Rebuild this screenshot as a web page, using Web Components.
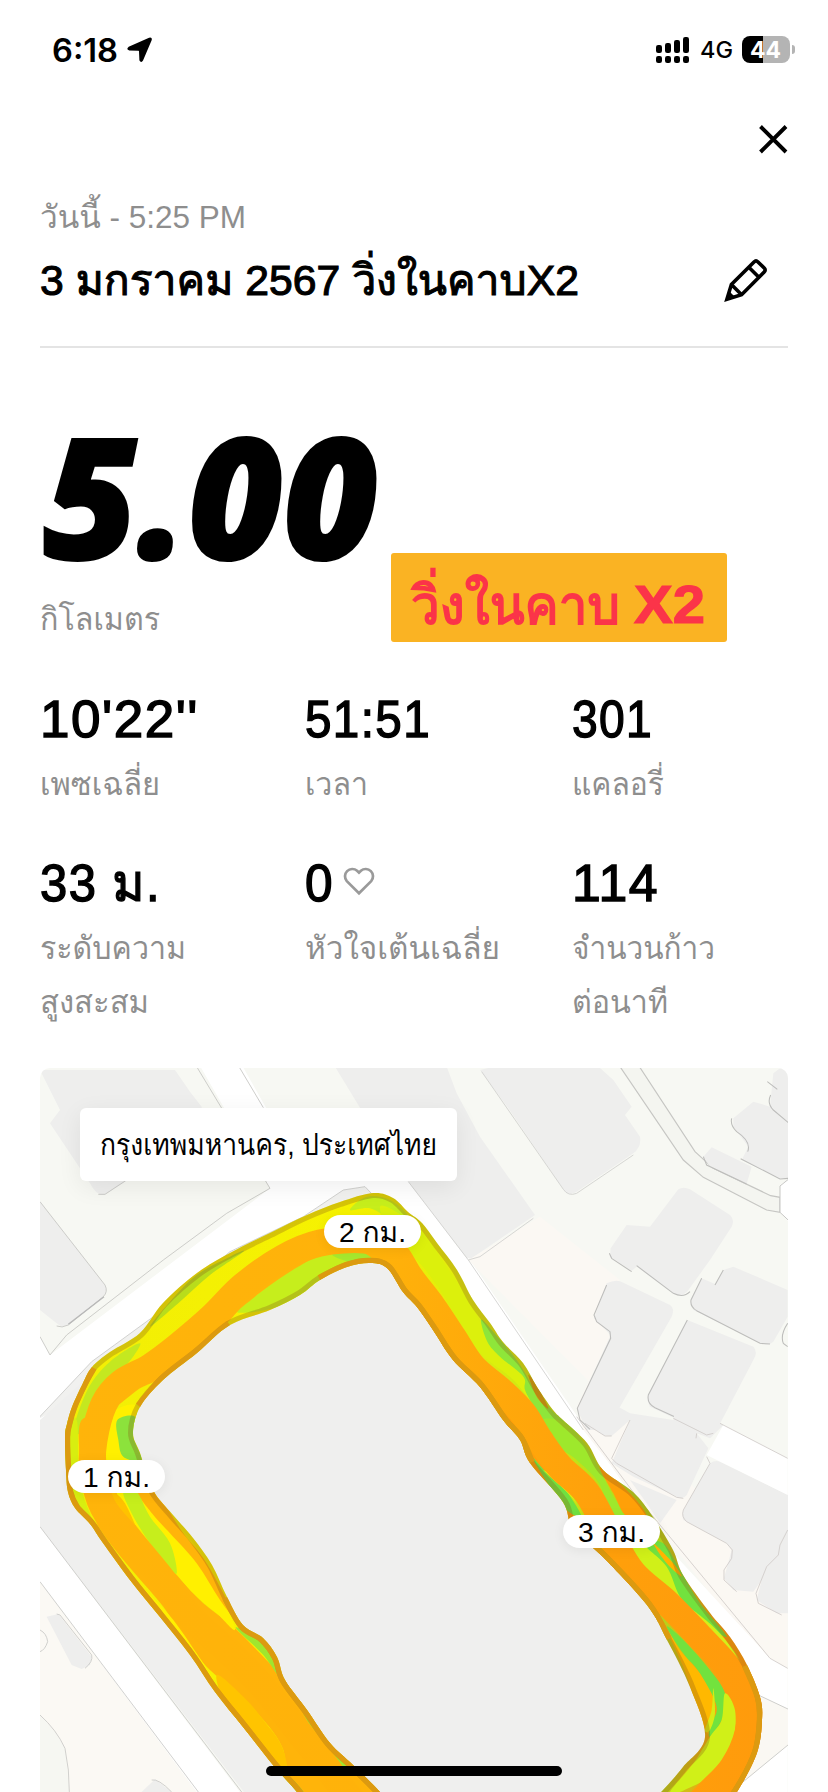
<!DOCTYPE html>
<html lang="th">
<head>
<meta charset="utf-8">
<title>Run summary</title>
<style>
html,body{margin:0;padding:0;background:#fff}
body{width:828px;height:1792px;overflow:hidden;font-family:"Liberation Sans",Loma,"Noto Sans Thai","Noto Sans",sans-serif;color:#000}
</style>
</head>
<body>
<run-page></run-page>
<script>
const define = (name, html, setup) => customElements.define(name, class extends HTMLElement {
  connectedCallback() {
    if (this.shadowRoot) return;
    const t = document.createElement('template');
    t.innerHTML = html;
    this.attachShadow({ mode: 'open' }).appendChild(t.content.cloneNode(true));
    if (setup) setup(this, this.shadowRoot);
  }
});

/* A single line of text stretched to the width given in its w attribute. */
define('fit-text', `<style>
:host{display:block;white-space:nowrap}
span{display:inline-block;transform-origin:0 50%}
</style><span><slot></slot></span>`, (el, root) => {
  const w = +el.getAttribute('w');
  el.style.width = w + 'px';
  const s = root.querySelector('span');
  const r = s.getBoundingClientRect().width;
  if (r) s.style.transform = `scaleX(${w / r})`;
});

define('status-bar', `<style>
:host{display:flex;height:100px;box-sizing:border-box;padding:30px 33px 0 52px;align-items:flex-start;font-family:Inter,sans-serif}
fit-text{line-height:41px}
.time{font-size:32px;font-weight:600}
.loc{margin:7px auto 0 8px}
.sig{margin-top:7px}
.net{font-size:23px;font-weight:500;margin:0 9px 0 10px}
.bat{display:flex;align-items:center;margin-top:6px}
.cell{width:48px;height:27px;border-radius:8px;background:linear-gradient(90deg,#000 21px,#b4b4b4 21px);color:#fff;font-size:23px;font-weight:700;box-sizing:border-box;padding-left:8px}
.cell fit-text{line-height:28px}
.cap{width:3px;height:9px;border-radius:0 4px 4px 0;background:#b4b4b4;margin-left:2px}
</style>
<fit-text class="time" w="66">6:18</fit-text>
<svg class="loc" width="27" height="26" viewBox="0 0 27 26"><path d="M23.4 1.5 Q25.6 .8 24.9 3 L16.3 23.2 Q15.2 25.2 14.2 23.2 L13.8 14.1 Q13.7 13.1 12.7 13 L3.2 12.6 Q1.2 11.8 3 10.6Z" stroke="#000" stroke-width="1.6" stroke-linejoin="round"/></svg>
<svg class="sig" width="34" height="27" viewBox="0 0 34 27"><g><rect x="0" y="8" width="6" height="8" rx="2.2"/><rect x="9" y="6" width="6" height="10" rx="2.2"/><rect x="18" y="3" width="6" height="13" rx="2.2"/><rect x="27" y="0" width="6" height="16" rx="2.2"/><rect x="0" y="19" width="6" height="7" rx="2.2"/><rect x="9" y="19" width="6" height="7" rx="2.2"/><rect x="18" y="19" width="6" height="7" rx="2.2"/><rect x="27" y="19" width="6" height="7" rx="2.2"/></g></svg>
<fit-text class="net" w="33">4G</fit-text>
<div class="bat"><div class="cell"><fit-text w="31">44</fit-text></div><div class="cap"></div></div>`);

define('close-row', `<style>
:host{display:flex;justify-content:flex-end;height:95px;padding:24px 40px 0 0;box-sizing:border-box}
</style><svg width="30" height="30" viewBox="0 0 30 30"><path d="M2.5 2.5 28 28M28 2.5 2.5 28" fill="none" stroke="#000" stroke-width="3.9"/></svg>`);

define('run-title', `<style>
:host{display:block;margin:0 40px;height:153px;box-sizing:border-box;border-bottom:2px solid #e4e4e4}
.date{font-size:32px;line-height:44px;color:#8e8e8e}
.row{display:flex;justify-content:space-between;margin-top:11px}
.name{font-size:43px;line-height:60px;-webkit-text-stroke:1.1px #000}
svg{margin:8px 20px 0 0}
</style>
<fit-text class="date" w="206"><slot name="date"></slot></fit-text>
<div class="row"><fit-text class="name" w="539"><slot></slot></fit-text>
<svg width="44" height="44" viewBox="0 0 44 44" fill="none" stroke="#000" stroke-width="3.6" stroke-linejoin="miter"><path d="M2.9 41.2 7.4 26.5 30 3.9 Q32 1.9 34 3.9 L40.2 10.1 Q42.2 12.1 40.2 14.1 L17.6 36.7Z M7.4 26.5 17.6 36.7 M24.8 9.2 34.9 19.3"/><path d="M2 42 5 33 11 39Z" fill="#000" stroke="none"/></svg></div>`);

define('run-distance', `<style>
:host{display:block;position:relative;height:219px;margin:74px 40px 0}
.num{font:italic 800 168px/144px "Open Sans",sans-serif;-webkit-text-stroke:2px #000;margin-left:3px}
.unit{font-size:32px;line-height:44px;color:#8e8e8e;margin-top:31px}
.tag{position:absolute;left:351px;top:131px;width:336px;height:89px;border-radius:3px;background:#fab323;color:#fb3449;box-sizing:border-box;padding:17px 0 0 20px;display:flex;gap:14px;line-height:70px;font-size:54px}
.th{-webkit-text-stroke:1.8px #fb3449}.x{font-weight:700;font-size:53px;-webkit-text-stroke:1.2px #fb3449}
</style>
<fit-text class="num" w="335"><slot></slot></fit-text>
<fit-text class="unit" w="120">กิโลเมตร</fit-text>
<div class="tag"><fit-text class="th" w="209">วิ่งในคาบ</fit-text><fit-text class="x" w="71">X2</fit-text></div>`);

define('run-stat', `<style>
:host{display:block}
.top{display:flex;gap:9px;font-size:52px;line-height:60px;letter-spacing:1.5px;-webkit-text-stroke:1.4px #000}
.label{font-size:32px;line-height:54px;color:#8e8e8e;margin-top:8px}
</style><div class="top"><slot name="value"></slot><slot name="icon"></slot></div><div class="label"><slot></slot></div>`);

define('stat-grid', `<style>
:host{display:grid;grid-template-columns:265px 267px 1fr;row-gap:42px;margin:48px 40px 0;align-items:start}
svg{margin-top:12px}
</style>
<run-stat><fit-text slot="value" w="159">10'22''</fit-text><fit-text w="120">เพซเฉลี่ย</fit-text></run-stat>
<run-stat><fit-text slot="value" w="126">51:51</fit-text><fit-text w="63">เวลา</fit-text></run-stat>
<run-stat><fit-text slot="value" w="81">301</fit-text><fit-text w="92">แคลอรี่</fit-text></run-stat>
<run-stat><fit-text slot="value" w="121">33 ม.</fit-text><fit-text w="146">ระดับความ</fit-text><fit-text w="109">สูงสะสม</fit-text></run-stat>
<run-stat><fit-text slot="value" w="29">0</fit-text><svg slot="icon" width="32" height="32" viewBox="0 0 32 32"><path d="M16 28.3 3.8 16.1 A7.3 7.3 0 0 1 14.1 5.8 L16 7.7 17.9 5.8 A7.3 7.3 0 0 1 28.2 16.1Z" fill="none" stroke="#9a9a9a" stroke-width="2.7"/></svg><fit-text w="195">หัวใจเต้นเฉลี่ย</fit-text></run-stat>
<run-stat><fit-text slot="value" w="87">114</fit-text><fit-text w="143">จำนวนก้าว</fit-text><fit-text w="96">ต่อนาที</fit-text></run-stat>`);

define('map-pill', `<style>
:host{position:absolute;width:97px;height:33px;border-radius:17px;background:#fff;box-sizing:border-box;padding-left:15px;font-size:28px;box-shadow:0 2px 12px #0001}
fit-text{line-height:36px}
</style><fit-text w="67"><slot></slot></fit-text>`);

/* Closed or open Catmull-Rom curve through "x,y x,y ..." points. */
function curve(str, closed) {
  const p = str.trim().split(/\s+/).map(s => s.split(',').map(Number)), n = p.length;
  const at = i => closed ? p[(i + n) % n] : p[Math.max(0, Math.min(n - 1, i))];
  let d = 'M' + p[0];
  for (let i = 0; i < (closed ? n : n - 1); i++) {
    const [a, b, c, e] = [at(i - 1), at(i), at(i + 1), at(i + 2)];
    d += `C${b[0] + (c[0] - a[0]) / 6},${b[1] + (c[1] - a[1]) / 6} ${c[0] - (e[0] - b[0]) / 6},${c[1] - (e[1] - b[1]) / 6} ${c}`;
  }
  return d + (closed ? 'Z' : '');
}
const OUTER = '310,1812 297,1792 273,1765 243,1727 215,1692 190,1655 160,1617 130,1580 103,1543 90,1524 75,1508 68,1492 66,1470 65,1437 67,1424 72,1407 83,1383 92,1367 110,1352 140,1333 163,1303 197,1273 230,1253 270,1233 307,1215 340,1202 373,1193 393,1198 408,1212 422,1223 437,1243 457,1270 473,1300 490,1323 503,1342 523,1363 537,1387 553,1410 563,1420 587,1443 603,1470 633,1492 653,1517 673,1550 683,1575 710,1613 730,1637 747,1665 760,1697 762,1720 757,1753 737,1792 720,1812';
const INNER = '640,1812 663,1790 683,1767 705,1737 690,1687 667,1640 647,1605 603,1557 573,1530 563,1502 530,1463 520,1440 503,1420 480,1387 453,1360 433,1330 417,1307 403,1292 387,1268 370,1263 347,1267 320,1280 300,1295 270,1310 230,1325 197,1353 163,1380 140,1407 133,1433 140,1453 153,1490 173,1515 193,1538 212,1565 227,1597 243,1625 263,1638 277,1657 285,1680 307,1710 330,1743 353,1765 380,1792 395,1812';
const RING = curve(OUTER) + 'L' + curve(INNER).slice(1) + 'Z';
/* Part of an edge, from its i-th to its j-th point. */
const part = (edge, i, j) => curve(edge.split(' ').slice(i, j).join(' '));
const BAND = '365,1812 345,1792 325,1765 297,1730 263,1687 230,1653 193,1620 163,1580 130,1540 103,1507 93,1470 94,1440 104,1404 121,1383 150,1367 177,1347 212,1317 243,1286 283,1258 320,1243 365,1240 392,1250 410,1277 433,1307 453,1337 473,1367 500,1390 523,1413 540,1440 560,1467 587,1493 610,1535 633,1573 667,1603 700,1637 730,1670 748,1702 748,1733 733,1767 710,1792 690,1812';
/* Colour patches on the track, in the units of the tile that holds them. */
const tiles = {
  a: [30, 1060, [
    ['#c6ee1c', '620,755 700,690 790,620 890,575 990,570 1045,602 960,610 890,645 820,700 730,745'],
    ['#a6e82e', '905,582 960,568 1030,572 1020,600 960,606'],
    ['#c6ee1c', '960,450 1010,410 1080,420 1135,470 1090,480 1020,445'],
    ['#b8dc1c', '360,800 420,725 500,645 600,590 640,575 540,645 450,725'],
    ['#c4e820', '130,1110 175,985 240,905 330,850 290,915 235,955 185,1020 160,1110'],
    ['#8ce23c', '262,1110 300,1060 318,1050 315,1110'],
    ['#ffb40a', '270,950 350,905 440,835 520,745 640,635 780,548 880,515 1000,525 1110,550 1075,630 1000,578 900,572 840,600 750,655 640,738 590,790 500,865 400,950 330,985 250,1040']]],
  b: [400, 1060, [
    ['#dcf00c', '-60,440 20,475 80,530 140,620 200,710 250,800 330,890 420,1010 440,1110 400,1040 340,960 240,880 180,790 120,690 50,600 -10,565'],
    ['#8ee63a', '243,780 275,810 350,900 400,980 450,1045 510,1110 430,1120 405,1050 375,990 370,950 300,890 262,845'],
    ['#cf9c10', '385,945 410,975 445,1045 410,1010']]],
  c: [30, 1420, [
    ['#ffb40a', '155,0 150,120 165,210 195,300 240,370 310,455 400,560 450,640 530,740 600,800 700,900 760,990 790,1130 1070,1130 980,1040 900,965 830,865 765,780 690,700 610,620 520,550 440,465 375,390 320,320 270,240 235,150 225,60 240,0'],
    ['#d8ee10', '105,20 140,0 145,120 155,210 185,300 150,270 115,200'],
    ['#fff000', '230,60 245,-20 320,-40 300,80 330,180 420,290 490,370 540,450 615,625 560,580 490,520 430,450 350,350 290,280 235,150'],
    ['#8ce23c', '262,0 315,-10 310,50 335,120 280,110 265,60'],
    ['#ffb40a', '322,215 375,215 460,340 530,430 620,600 570,540 500,430 420,340 370,285'],
    ['#c6ee1c', '280,215 320,215 360,290 420,370 440,460 400,425 340,340 300,270'],
    ['#ffc200', '240,215 285,250 340,380 300,330 250,270'],
    ['#a0e62e', '618,625 660,640 715,680 755,780 700,705'],
    ['#fff000', '245,400 310,470 370,535 430,600 500,700 550,780 470,685 380,580 300,490'],
    ['#ffc400', '560,765 640,830 700,900 760,990 780,1130 720,1030 600,880'],
    ['#a0e62e', '820,880 880,960 970,1040 990,1060 930,1040 880,980'],
    ['#8ce23c', '745,1045 790,1080 825,1125 790,1125']]],
  d: [400, 1420, [
    ['#9ee82c', '425,0 500,10 560,80 600,150 640,230 680,285 630,290 600,195 530,120 460,70'],
    ['#ffa008', '600,140 690,220 740,290 680,290 640,220'],
    ['#70e040', '395,110 450,170 500,215 545,290 500,270 450,200'],
    ['#dff010', '430,150 490,195 530,250 500,215'],
    ['#d0f018', '665,350 740,370 800,430 850,520 870,580 820,530 750,490 700,420'],
    ['#72e23e', '730,370 790,370 840,450 900,550 980,650 900,600 840,530 800,440'],
    ['#ffb400', '760,370 820,430 845,470 800,430'],
    ['#d6ee18', '860,560 940,620 1000,690 1030,750 960,670'],
    ['#ffb800', '780,590 840,690 900,760 940,830 930,940 900,890 850,740'],
    ['#72e23e', '800,620 850,660 930,750 975,820 970,890 930,950 930,915 950,860 900,760 850,700'],
    ['#d0f018', '975,820 1005,870 1000,960 960,1050 840,1116 810,1116 880,1030 930,950 965,900'],
    ['#d8ec14', '940,805 945,880 930,930 915,930 935,870'],
    ['#68c840', '785,665 830,730 870,810 840,760']]]
};
const patches = Object.values(tiles).map(([x, y, list]) => `<g transform="translate(${x} ${y}) scale(.33333)">` +
  list.map(([c, p]) => `<path fill="${c}" d="${curve(p, true)}"/>`).join('') + '</g>').join('');

define('route-map', `<style>
:host{display:block;position:relative;margin:39px 40px 0;height:724px;border-radius:10px 10px 0 0;overflow:hidden;background:#f7f8f3}
svg{display:block}
.place{position:absolute;left:40px;top:40px;width:377px;height:73px;border-radius:6px;background:#fff;box-shadow:0 6px 24px #00000012;box-sizing:border-box;padding-left:20px;font-size:29px}
.place fit-text{line-height:75px}
</style>
<svg width="748" height="724" viewBox="40 1068 748 724">
<defs><clipPath id="ring"><path d="${RING}"/></clipPath>
<linearGradient id="heat" gradientUnits="userSpaceOnUse" x1="60" y1="0" x2="760" y2="0"><stop offset="0" stop-color="#ffb40a"/><stop offset=".45" stop-color="#ffb20a"/><stop offset=".8" stop-color="#ff9f0b"/><stop offset="1" stop-color="#ff9b0c"/></linearGradient>
<linearGradient id="under" gradientUnits="userSpaceOnUse" x1="60" y1="0" x2="760" y2="0"><stop offset="0" stop-color="#f2ee06"/><stop offset=".42" stop-color="#f6f200"/><stop offset=".6" stop-color="#dcec10"/><stop offset=".85" stop-color="#b0d81c"/><stop offset=".95" stop-color="#ff9b0c"/></linearGradient></defs>
<g transform="translate(30 1060) scale(.33333)">
 <path fill="#fff" d="M500 0H627L780 270 1040 230 1140 365 1320 600 1800 1300 1500 1300 30 1300V830L60 885 720 385Z"/>
 <g fill="#eeeeed"><path d="M30 30H435L480 95 515 140 520 330 290 362 225 403Q200 410 180 370L60 190 90 150Z"/><path d="M30 425 225 675Q235 695 220 710L115 795Q95 805 80 790L30 750Z"/><path d="M915 20H1250L1280 100 1350 230 1515 465 1325 595 1310 595 1135 365 1000 160Z"/></g>
 <path d="M500 20 720 385 590 460 400 600 110 825 60 885 30 830M627 20 700 143M30 425 225 675Q235 695 220 710L115 795Q95 805 80 798M287 362 225 403 205 403" fill="none" stroke="#c4c4c0" stroke-width="2.5"/>
 <path d="M222 710 115 793" stroke="#b8b8b8" stroke-width="4"/>
 <path fill="#f1f1ef" stroke="#c9c9c6" stroke-width="2.5" d="M20 1080 185 905 370 770 600 575 820 470 940 390 1005 380 1100 480"/>
</g>
<path fill="#efefee" d="M40 1420 163 1310 350 1215 390 1210 560 1450 730 1690 730 1800H250L40 1527Z"/>
<g transform="translate(400 1060) scale(.33333)">
 <path fill="#fbf8f3" d="M205 600 420 470 660 660 590 760 630 830 530 1040 550 1110 1163 1900 1163 1500 900 1300Z"/>
 <path fill="#f4f5f0" stroke="#c6c6c3" stroke-width="3.5" d="M660 20 850 300 910 352 1100 450 1140 457V412L1112 407 940 325 885 275 715 15Z"/>
 <path fill="#fff" d="M1140 375 1175 350V495L1140 457Z"/><path d="M1140 457 1175 490M1140 457V378L1165 358" fill="none" stroke="#c6c6c3" stroke-width="3"/>
 <g fill="#eeeeed">
 <path d="M240 30 300 15H590L640 60 695 140 675 165 720 230Q725 260 700 280L530 395Q505 410 490 388L325 145Z"/>
 <path d="M835 388Q850 378 870 388L990 465Q1005 480 995 500L930 600 865 690Q845 715 820 700L710 620 695 632 630 590 632 565 680 495 750 500Z"/>
 <path d="M970 630 1000 620 1163 690V770L1120 845Q1105 860 1080 850L880 750Q868 735 872 720L905 655 945 672Z"/>
 <path d="M620 670Q650 655 670 668L810 735Q825 745 815 770L620 1110H560L532 1050 632 825 582 775Z"/>
 <path d="M862 780 1060 860Q1075 875 1060 900L950 1110 900 1110 750 1040Q740 1020 745 1005Z"/>
 <path d="M1000 175 1060 125 1110 140 1120 40 1140 25H1165V355L1140 355 1025 300 1045 260 1000 200Z"/>
 <path d="M910 290 935 262 1055 320 1040 372 930 320Z"/></g>
 <g fill="none" stroke="#bdbdbb" stroke-width="2.5"><path d="M245 35 490 388Q505 410 530 400L700 285M25 365 205 600 550 1110M205 600 240 590 400 475" stroke="#cfcfcc"/><path d="M628 580 635 595 695 635M710 617 820 700Q850 715 870 695M905 655 873 720Q870 740 890 752L1080 850 1110 852M862 780 745 1005Q740 1030 765 1043L910 1110M620 675 582 765 590 785 630 815 632 835 532 1045 540 1080 570 1108M970 630 945 675M995 175Q990 195 1010 215 1055 245 1043 275M1022 296 1140 357 1165 355M1102 65 1132 88M1112 105Q1100 130 1120 150L1165 188M910 290 920 315 1040 372M1163 790Q1140 825 1150 850L1163 860" stroke-width="3.2"/></g>
</g>
<g transform="translate(400 1420) scale(.33333)">
 <g fill="#eeeeed"><path d="M560 10 600 -70 690 -20 820 0 830 -60 970 15 930 55 890 40 925 85 860 225Q850 240 830 230L700 170 635 130 690 0 635 48 610 45Z"/><path d="M690 180 830 240 780 310 740 250Z"/><path d="M930 130Q945 120 960 125L1165 225V580L1130 580 1070 540 1085 480 1060 515 1000 510 972 475 995 390 980 370 850 300Q845 285 850 270Z"/></g>
 <path fill="#fff" d="M970 15 1163 115V225L920 105Z"/>
 <path fill="#fff" d="M820 400 1110 715 1163 745V1116H1000Z"/>
 <path fill="#faf8f3" stroke="#cfcfcc" stroke-width="3" d="M1075 825 1170 870V970L1030 1085Z"/>
 <path fill="none" stroke="#cfcac8" stroke-width="2.5" d="M530 -10 710 230 1110 715 1163 745M555 10 615 48 635 48M690 0 635 115 650 130 830 232 850 235M890 40 888 55M820 -5 920 45 940 40M960 10 1163 115M920 110 930 130 850 270Q843 290 860 305L980 370 997 390 995 415 972 450 972 480 1010 515M1163 330 1140 375 1135 405 1100 440 1068 520 1075 550 1145 585"/>
</g>
<g transform="translate(30 1420) scale(.33333)">
 <path fill="#fff" d="M30 320 640 1130H510L30 485Z"/>
 <path fill="#fbf9f4" d="M30 485 510 1130H30Z"/>
 <path fill="#f6f7f2" d="M30 885 70 930 105 985 118 1116H30Z"/>
 <path fill="#eeeeed" d="M50 590 85 582 185 710 180 735 155 747 125 735ZM335 1116 375 1078 425 1116Z"/>
 <path fill="none" stroke="#c8c8c5" stroke-width="2.5" d="M30 320 635 1116M30 485 505 1116M30 885Q80 930 105 985L115 1050 118 1116M80 582 90 585 185 705Q190 725 165 745M30 630Q50 640 53 665 45 690 30 695M365 1080Q385 1075 425 1116"/>
</g>
<path fill="url(#under)" d="${RING}"/>
<g clip-path="url(#ring)">
 <path fill="#ff9f0a" d="M370 1240 400 1258 440 1320 470 1370 530 1430 560 1490 600 1550 660 1620 640 1640 500 1450 400 1320 380 1275Z"/>
 ${patches}
 <path fill="none" stroke="url(#heat)" stroke-width="27" d="${curve(BAND)}"/>
 <path fill="none" stroke="#8a5a18" stroke-opacity=".3" stroke-width="10" d="${RING}"/>
 <path fill="none" stroke="#dc9a10" stroke-width="10.5" d="${part(OUTER, 0, 18)}${part(OUTER, 47, 60)}${part(INNER, 5, 9)}${part(INNER, 10, 22)}${part(INNER, 24, 28)}${part(INNER, 34, 45)}"/>
</g>
</svg>
<div class="place"><fit-text w="337">กรุงเทพมหานคร, ประเทศไทย</fit-text></div>
<map-pill style="left:284px;top:147px">2 กม.</map-pill>
<map-pill style="left:28px;top:392px">1 กม.</map-pill>
<map-pill style="left:523px;top:447px">3 กม.</map-pill>`);

define('home-indicator', `<style>:host{position:absolute;left:266px;top:1766px;width:296px;height:10px;border-radius:5px;background:#000}</style>`);

define('run-page', `<style>:host{display:block;position:relative;width:828px;height:1792px;overflow:hidden;background:#fff}</style>
<status-bar></status-bar>
<close-row></close-row>
<run-title><span slot="date">วันนี้ - 5:25 PM</span>3 มกราคม 2567 วิ่งในคาบX2</run-title>
<run-distance>5.00</run-distance>
<stat-grid></stat-grid>
<route-map></route-map>
<home-indicator></home-indicator>`);
</script>
</body>
</html>
